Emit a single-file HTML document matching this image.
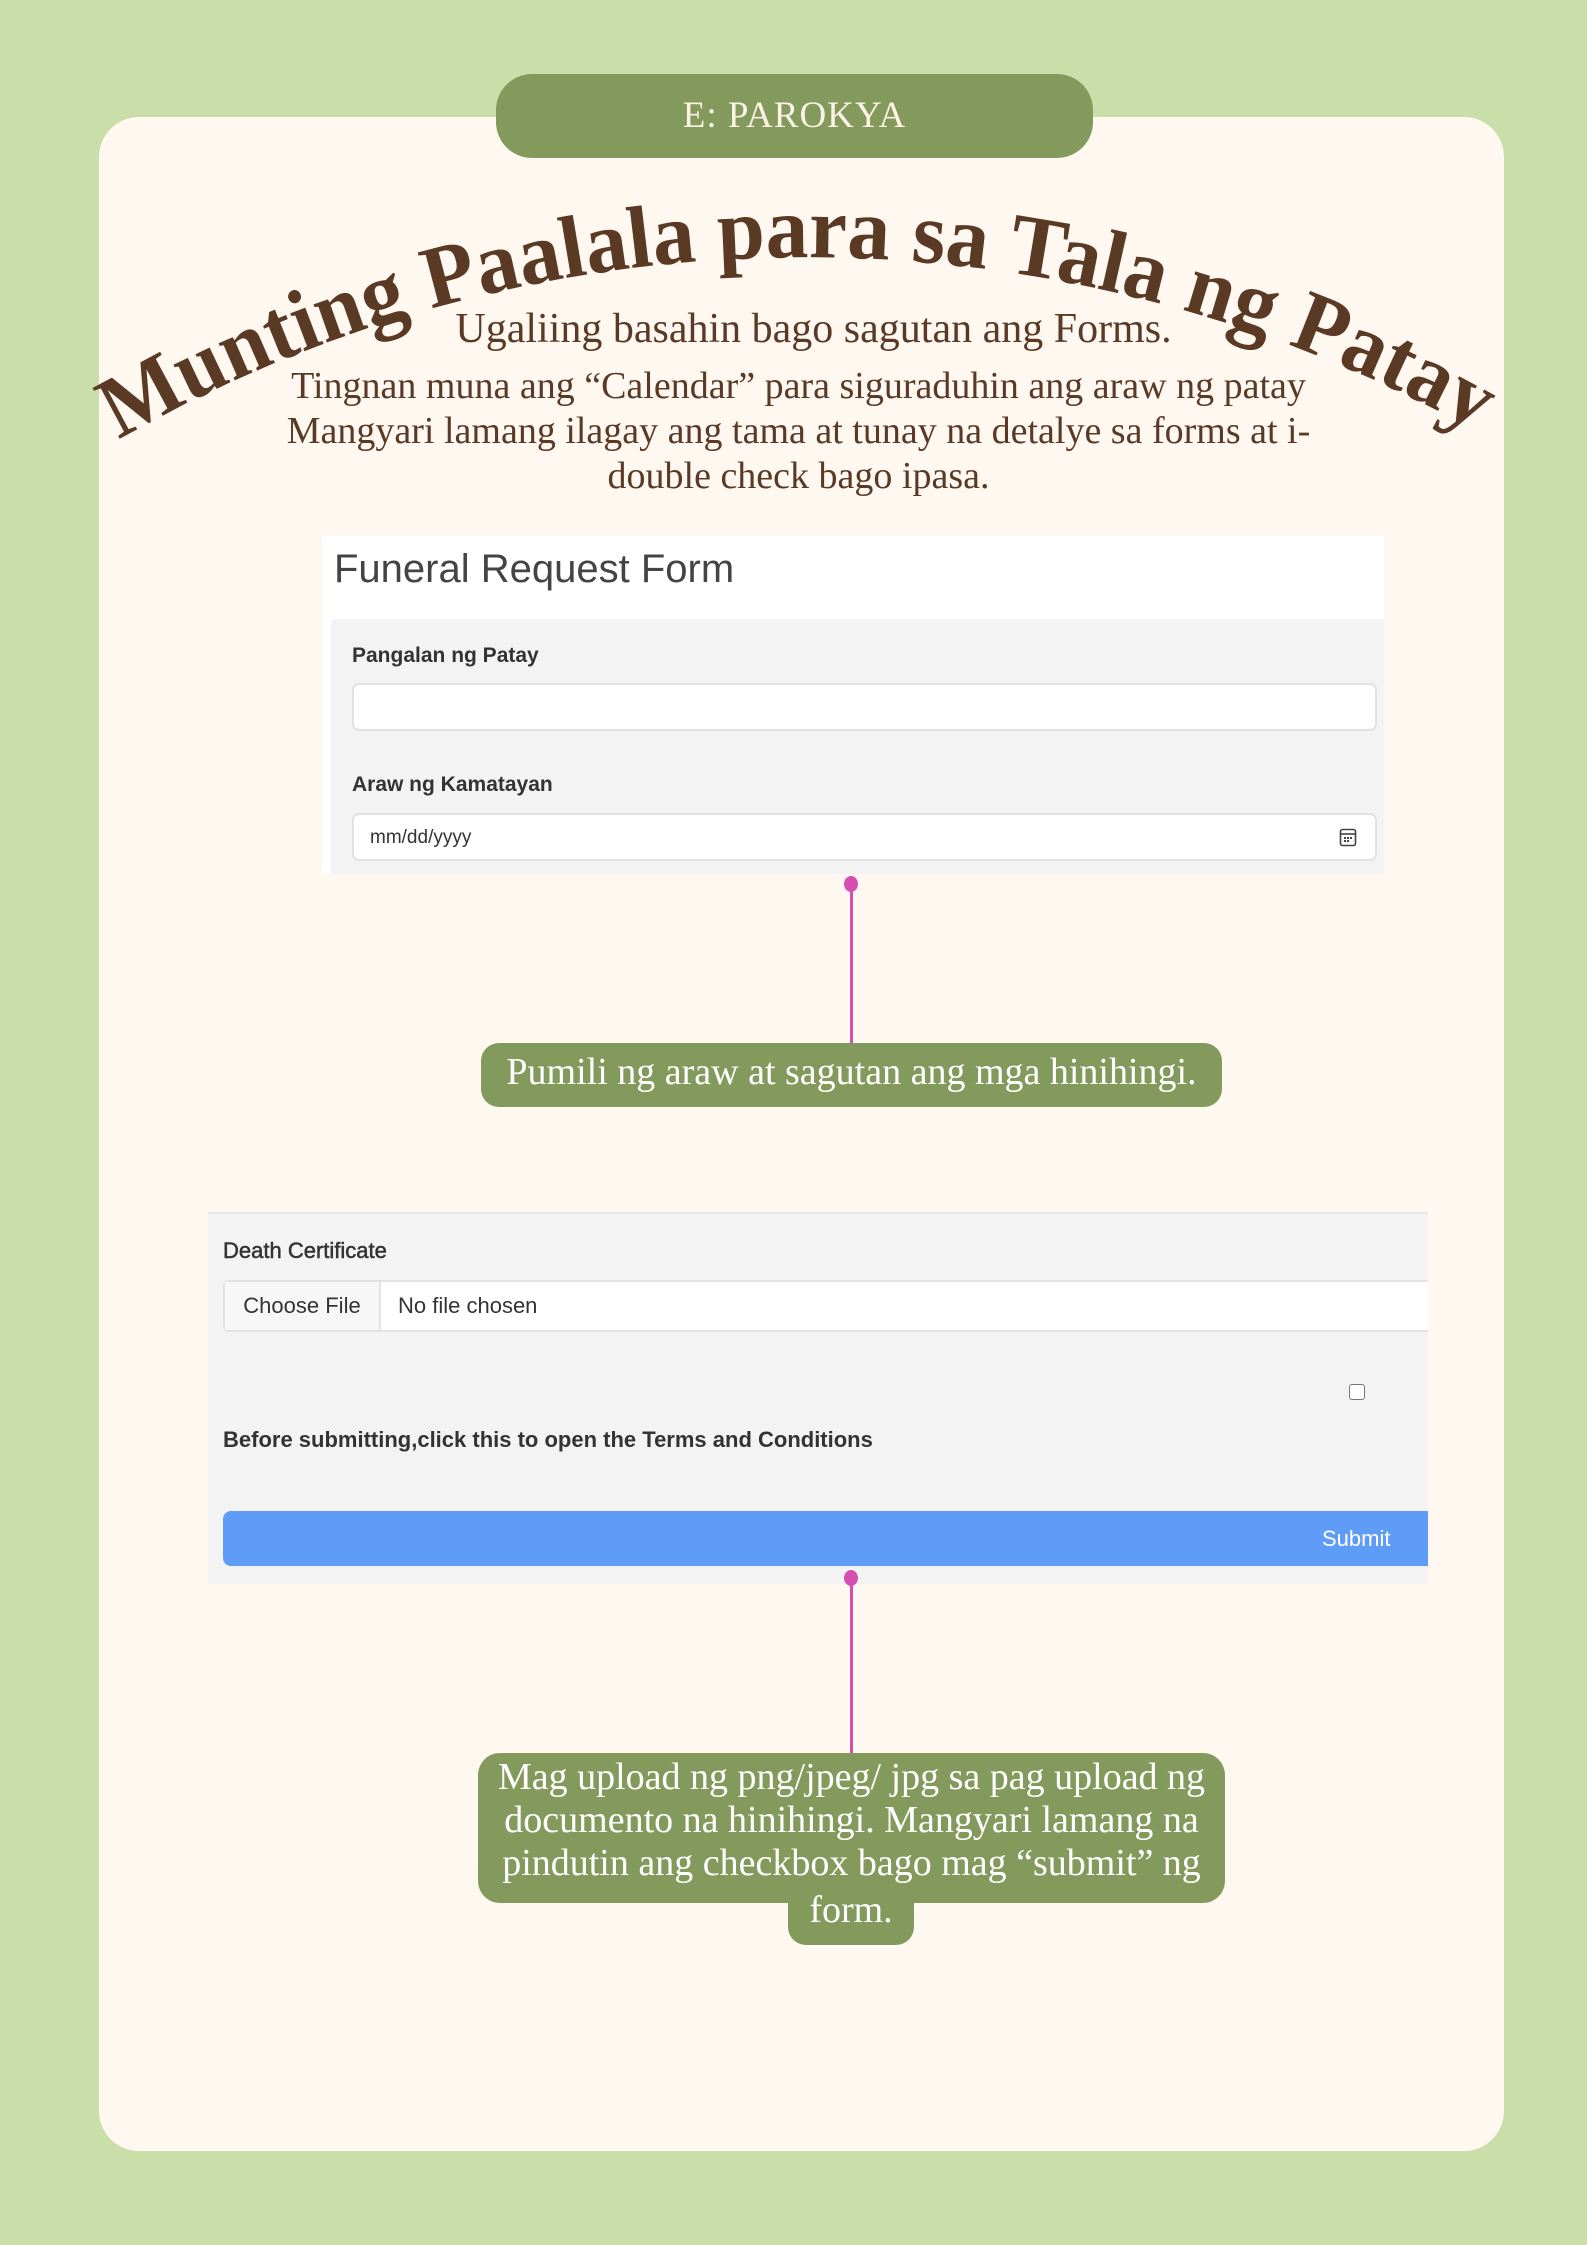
<!DOCTYPE html>
<html><head><meta charset="utf-8"><style>
*{margin:0;padding:0;box-sizing:border-box}
body{width:1587px;height:2245px;background:#c9dea9;position:relative;overflow:hidden;font-family:"Liberation Serif",serif}
.card{position:absolute;left:99px;top:117px;width:1405px;height:2034px;background:#fef8f1;border-radius:40px}
.tab{position:absolute;left:496px;top:74px;width:597px;height:84px;background:#849a5c;border-radius:36px;color:#fbf3e6;font-size:37px;text-align:center;line-height:84px;letter-spacing:1px}
.p{position:absolute;left:0;width:1587px;text-align:center;color:#5b3a25;font-size:38px}
.form1{position:absolute;left:322px;top:536px;width:1062px;height:338px;background:#fff;font-family:"Liberation Sans",sans-serif}
.gray{position:absolute;background:#f3f3f3}
.lbl{position:absolute;font-family:"Liberation Sans",sans-serif;font-weight:bold;font-size:21px;color:#333}
.inp{position:absolute;background:#fff;border:2px solid #e2e2e2;border-radius:7px}
.dot{position:absolute;width:14px;height:16px;border-radius:50%;background:#d44fb0}
.line{position:absolute;width:3px;background:#d44fb0}
.bub{position:absolute;background:#849a5c;color:#fff;font-size:38px;text-align:center}
</style></head><body>
<div class="card"></div>
<div class="tab">E: PAROKYA</div>
<svg style="position:absolute;left:0;top:0" width="1587" height="600">
<defs><path id="arc" d="M 110 445 A 1380 1380 0 0 1 1500 445"/></defs>
<text font-family="Liberation Serif,serif" font-weight="bold" font-size="88" fill="#5b3a25"><textPath href="#arc" startOffset="10" textLength="1420" lengthAdjust="spacingAndGlyphs">Munting Paalala para sa Tala ng Patay</textPath></text>
</svg>
<div class="p" style="top:305px;left:20px;font-size:42px">Ugaliing basahin bago sagutan ang Forms.</div>
<div class="p" style="top:364px;left:5px">Tingnan muna ang “Calendar” para siguraduhin ang araw ng patay</div>
<div class="p" style="top:409px;left:5px">Mangyari lamang ilagay ang tama at tunay na detalye sa forms at i-</div>
<div class="p" style="top:454px;left:5px">double check bago ipasa.</div>

<div class="form1">
<div style="position:absolute;left:12px;top:11px;font-size:40px;color:#444">Funeral Request Form</div>
<div class="gray" style="left:9px;top:83px;width:1053px;height:255px;border-radius:6px 0 0 0"></div>
<div class="lbl" style="left:30px;top:108px">Pangalan ng Patay</div>
<div class="inp" style="left:30px;top:147px;width:1025px;height:48px"></div>
<div class="lbl" style="left:30px;top:237px">Araw ng Kamatayan</div>
<div class="inp" style="left:30px;top:277px;width:1025px;height:48px"><span style="position:absolute;left:16px;top:12px;font-size:19px;color:#333">mm/dd/yyyy</span>
<svg style="position:absolute;right:18px;top:12px" width="18" height="20" viewBox="0 0 18 20"><rect x="1.5" y="2.5" width="15" height="16" rx="2" fill="none" stroke="#444" stroke-width="1.6"/><line x1="1.5" y1="7" x2="16.5" y2="7" stroke="#444" stroke-width="1.6"/><rect x="5" y="10" width="2" height="2" fill="#444"/><rect x="8" y="10" width="2" height="2" fill="#444"/><rect x="11" y="10" width="2" height="2" fill="#444"/><rect x="5" y="13" width="2" height="2" fill="#444"/><rect x="8" y="13" width="2" height="2" fill="#444"/></svg></div>
</div>

<div class="dot" style="left:844px;top:876px"></div>
<div class="line" style="left:850px;top:884px;height:160px"></div>
<div class="bub" style="left:481px;top:1043px;width:741px;height:64px;border-radius:18px;line-height:58px">Pumili ng araw at sagutan ang mga hinihingi.</div>

<div class="gray" style="left:208px;top:1212px;width:1220px;height:372px;border-top:2px solid #e6e6e6"></div>
<div class="lbl" style="left:223px;top:1238px;font-size:22px;font-weight:normal;-webkit-text-stroke:0.5px #333">Death Certificate</div>
<div style="position:absolute;left:223px;top:1280px;width:1205px;height:52px;background:#fff;border:2px solid #e2e2e2;border-right:none;border-radius:6px 0 0 6px;font-family:'Liberation Sans',sans-serif;font-size:22px;color:#333">
<div style="position:absolute;left:0;top:0;width:156px;height:48px;background:#f7f7f7;border-right:2px solid #e2e2e2;line-height:48px;text-align:center">Choose File</div>
<div style="position:absolute;left:173px;top:0;line-height:48px">No file chosen</div></div>
<div style="position:absolute;left:1349px;top:1384px;width:16px;height:16px;border:1.5px solid #777;border-radius:3px;background:#fff"></div>
<div class="lbl" style="left:223px;top:1427px;font-size:22px">Before submitting,click this to open the Terms and Conditions</div>
<div style="position:absolute;left:223px;top:1511px;width:1205px;height:55px;background:#5e9cf8;border-radius:8px 0 0 8px;color:#fff;font-family:'Liberation Sans',sans-serif;font-size:22px;line-height:55px"><span style="position:absolute;left:1099px">Submit</span></div>

<div class="dot" style="left:844px;top:1570px"></div>
<div class="line" style="left:850px;top:1578px;height:176px"></div>
<div class="bub" style="left:478px;top:1753px;width:747px;height:150px;border-radius:22px;padding-top:3px;line-height:43px">Mag upload ng png/jpeg/ jpg sa pag upload ng<br>documento na hinihingi. Mangyari lamang na<br>pindutin ang checkbox bago mag “submit” ng</div>
<div class="bub" style="left:788px;top:1890px;width:126px;height:55px;border-radius:0 0 18px 18px;line-height:40px">form.</div>
</body></html>
